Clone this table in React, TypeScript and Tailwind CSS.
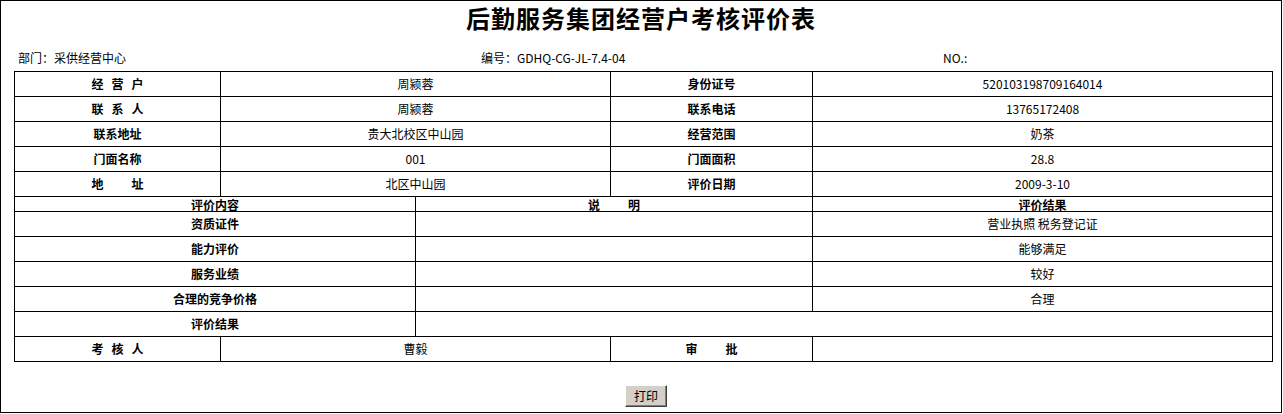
import type { ReactNode } from "react";

const FONT = "font-['Noto_Sans_CJK_SC',sans-serif]";

// label with spread-out characters, e.g. "经 营 户" or "地    址"
function Spaced({ text, gap }: { text: string; gap: "sm" | "lg" }) {
  return (
    <span className={gap === "sm" ? "inline-flex gap-[8px]" : "inline-flex gap-[28px]"}>
      {text.split("").map((ch, i) => (
        <span key={i}>{ch}</span>
      ))}
    </span>
  );
}

function Cell({
  children,
  bold,
  span,
  header,
}: {
  children?: ReactNode;
  bold?: boolean;
  span?: number;
  header?: boolean;
}) {
  return (
    <td
      className={`border border-black p-0 text-center align-middle ${
        header ? "h-[15px] leading-[13px]" : "h-[25px]"
      } ${bold ? "font-bold" : "font-normal"}`}
      colSpan={span}
    >
      {children}
    </td>
  );
}

const infoRows: [ReactNode, string, ReactNode, string][] = [
  [<Spaced text="经营户" gap="sm" />, "周颍蓉", "身份证号", "520103198709164014"],
  [<Spaced text="联系人" gap="sm" />, "周颍蓉", "联系电话", "13765172408"],
  ["联系地址", "贵大北校区中山园", "经营范围", "奶茶"],
  ["门面名称", "001", "门面面积", "28.8"],
  [<Spaced text="地址" gap="lg" />, "北区中山园", "评价日期", "2009-3-10"],
];

const evalRows = [
  ["资质证件", "营业执照 税务登记证"],
  ["能力评价", "能够满足"],
  ["服务业绩", "较好"],
  ["合理的竞争价格", "合理"],
];

export default function App() {
  return (
    <div className={`${FONT} h-[413px] w-[1282px] border border-black bg-white text-black`}>
      <h1 className="pt-[5px] text-center text-[24px] font-bold leading-[24px] tracking-[1px]">
        后勤服务集团经营户考核评价表
      </h1>

      <div className="mt-[21px] flex pl-[17px] text-[12px] leading-[14px]">
        <div className="w-[463px]">部门：采供经营中心</div>
        <div className="w-[462px]">编号：GDHQ-CG-JL-7.4-04</div>
        <div>NO.:</div>
      </div>

      <table className="ml-[13px] mt-[6px] w-[1259px] table-fixed border-collapse text-[12px] leading-[14px]">
        <colgroup>
          <col className="w-[206px]" />
          <col className="w-[195px]" />
          <col className="w-[195px]" />
          <col className="w-[202px]" />
          <col className="w-[460px]" />
        </colgroup>
        <tbody>
          {infoRows.map(([label, value, label2, value2], i) => (
            <tr key={i}>
              <Cell bold>{label}</Cell>
              <Cell span={2}>{value}</Cell>
              <Cell bold>{label2}</Cell>
              <Cell>{value2}</Cell>
            </tr>
          ))}

          <tr>
            <Cell bold header span={2}>
              评价内容
            </Cell>
            <Cell bold header span={2}>
              <Spaced text="说明" gap="lg" />
            </Cell>
            <Cell bold header>
              评价结果
            </Cell>
          </tr>

          {evalRows.map(([label, result]) => (
            <tr key={label}>
              <Cell bold span={2}>
                {label}
              </Cell>
              <Cell span={2} />
              <Cell>{result}</Cell>
            </tr>
          ))}

          <tr>
            <Cell bold span={2}>
              评价结果
            </Cell>
            <Cell span={3} />
          </tr>

          <tr>
            <Cell bold>
              <Spaced text="考核人" gap="sm" />
            </Cell>
            <Cell span={2}>曹毅</Cell>
            <Cell bold>
              <Spaced text="审批" gap="lg" />
            </Cell>
            <Cell />
          </tr>
        </tbody>
      </table>

      <div className="mt-[23px] flex justify-center pl-[10px]">
        <button
          type="button"
          className="h-[22px] w-[42px] border border-b-[#404040] border-l-white border-r-[#404040] border-t-white bg-[#d4d0c8] text-[12px] leading-[14px] text-black shadow-[inset_-1px_-1px_0_#808080]"
        >
          打印
        </button>
      </div>
    </div>
  );
}
